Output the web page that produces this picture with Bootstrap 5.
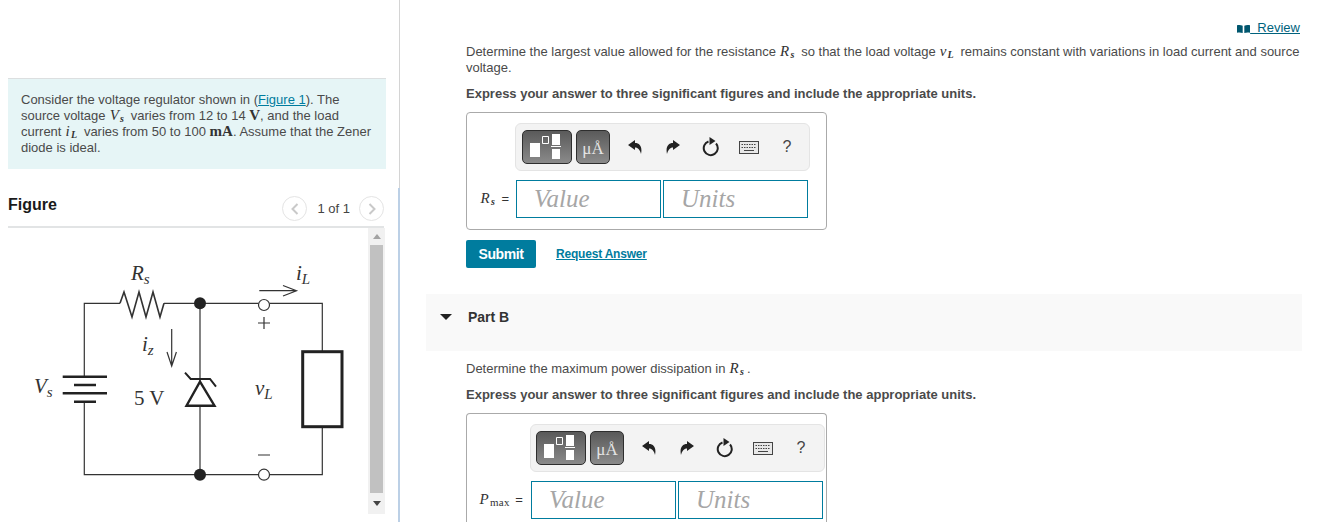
<!DOCTYPE html>
<html lang="en">
<head>
    <meta charset="UTF-8">
    <meta name="viewport" content="width=device-width, initial-scale=1.0">
    <title>Voltage regulator</title>
    <link href="https://cdn.jsdelivr.net/npm/bootstrap@5.3.0/dist/css/bootstrap.min.css" rel="stylesheet">
    <style>
        html, body {
            height: 522px;
            overflow: hidden;
        }
        body {
            font-family: "Liberation Sans", Arial, sans-serif;
            font-size: 13px;
            line-height: 16px;
            color: #4a4a4a;
            background: #fff;
        }
        a { color: #007c9e; }
        .shell { height: 522px; }
        .left-pane { width: 398px; flex: none; padding: 78px 12px 0 8px; }
        .prompt-box {
            width: 378px;
            height: 91px;
            padding: 13px 13px 0;
            background: #e6f5f6;
            border-top: 1px solid #dcdfe0;
        }
        .fig-head { height: 59px; width: 376px; border-bottom: 2px solid #e2e4e5; padding-top: 27px; }
        .fig-title { font-size: 16px; font-weight: 700; color: #1a1a1a; line-height: 16px; padding-top: 1px; }
        .pager-btn { width: 25px; height: 25px; border: 1px solid #e4e4e4; border-radius: 50%; }
        .pager-count { margin: 0 9px 0 10px; padding-top: 5px; color: #444; }
        .fig-body { width: 377px; height: 286px; }
        .fig-draw { width: 360px; height: 286px; flex: none; }
        .fig-scroll { width: 17px; background: #f1f1f1; padding: 0 2px; }
        .fig-thumb { height: 248px; background: #c1c1c1; flex: none; }
        .fig-arrow { height: 17px; flex: none; }
        .split { width: 2px; flex: none; }
        .split-top { height: 188px; width: 1px; margin-left: 1px; background: #d4d4d4; }
        .split-low { flex: 1; background: #bcd0e6; }
        .right-pane { flex: 1; padding: 20px 24px 0 66px; min-width: 0; }
        .review-link { text-align: right; height: 15px; line-height: 15px; }
        .review-link a { color: #00627d; }
        .q-text { margin: 0; }
        .q-first { margin-top: 9px; }
        .q-note { margin: 10px 0 0; font-weight: 700; font-size: 13px; color: #4a4a4a; }
        .answer-box {
            width: 361px;
            height: 118px;
            margin-top: 10px;
            border: 1px solid #aaa;
            border-radius: 4px;
            padding: 10px 0 0 13px;
        }
        .answer-low { height: 140px; margin-top: 10px; border-bottom: 0; padding-left: 12px; }
        .answer-low .toolbar { padding-left: 5px; }
        .label-col { width: 36px; flex: none; color: #333; }
        .label-col-wide { width: 52px; }
        .tools-slot { padding-left: 35px; }
        .tools-slot-wide { padding-left: 51px; }
        .toolbar {
            width: 295px;
            height: 48px;
            padding: 6px 0 6px 6px;
            background: #f3f3f3;
            border: 1px solid #e4e4e4;
            border-radius: 6px;
        }
        .tpl-btn {
            height: 34px;
            border: 1px solid #2e2e2e;
            border-radius: 5px;
            background: linear-gradient(#5a5a5a, #8a8a8a);
        }
        .tpl-one { width: 50px; margin-right: 4px; padding-right: 2px; }
        .tpl-two { width: 34px; padding-top: 3px; color: #e4e4e4; font-family: "Liberation Serif", serif; font-size: 17px; }
        .tool-icons { flex: 1; padding-left: 6px; }
        .tool-icon { width: 38px; }
        .tool-help { font-size: 16px; color: #444; }
        .answer-row { margin-top: 9px; }
        .answer-field {
            width: 145px;
            height: 38px;
            margin-right: 2px;
            padding-left: 17px;
            border: 1px solid #007c9e;
            font-family: "Liberation Serif", serif;
            font-style: italic;
            font-size: 25px;
            color: #a6a6a6;
            line-height: 36px;
        }
        .actions { margin-top: 10px; }
        .submit-btn {
            width: 70px;
            height: 28px;
            padding: 0;
            background: #007c9e;
            border: 0;
            border-radius: 2px;
            color: #fff;
            font-size: 14px;
            font-weight: 700;
            letter-spacing: -0.4px;
        }
        .answer-link { margin-left: 20px; font-size: 12px; font-weight: 700; letter-spacing: -0.2px; }
        .part-band {
            height: 57px;
            margin: 26px -2px 0 -40px;
            padding: 14px 0 0 14px;
            background: #f9f9f9;
            color: #333;
            font-size: 14px;
            font-weight: 700;
        }
        .part-caret {
            width: 0;
            height: 0;
            margin: 0 16px 0 0;
            border-left: 6px solid transparent;
            border-right: 6px solid transparent;
            border-top: 6px solid #222;
        }
        .part-row { height: 18px; }
        .after-band { margin-top: 10px; }
        .mth { font-family: "Liberation Serif", serif; font-style: italic; font-size: 15px; line-height: 0; letter-spacing: 1.2px; margin: 0 2px 0 .5px; color: #333; }
        .mth-up { font-family: "Liberation Serif", serif; font-weight: 700; font-size: 15px; line-height: 0; color: #333; }
        .mth sub { font-size: 10px; font-weight: 700; bottom: -2px; line-height: 0; position: relative; vertical-align: baseline; }
        .mth sub.up { font-size: 11px; font-style: normal; font-weight: 400; letter-spacing: .3px; }
        .fig-text { font-family: "Liberation Serif", serif; font-size: 21px; fill: #333; }
    </style>
</head>
<body>
    <div class="shell d-flex">
        <div class="left-pane">
            <div class="prompt-box">
                Consider the voltage regulator shown in (<a href="#">Figure 1</a>). The source voltage
                <span class="mth">V<sub>s</sub></span> varies from 12 to 14 <span class="mth-up">V</span>, and the load
                current <span class="mth">i<sub>L</sub></span> varies from 50 to 100 <span class="mth-up">mA</span>. Assume that the Zener
                diode is ideal.
            </div>
            <div class="fig-head d-flex justify-content-between">
                <div class="fig-title">Figure</div>
                <div class="d-flex align-items-start">
                    <div class="pager-btn d-flex align-items-center justify-content-center">
                        <svg width="8" height="12" viewBox="0 0 8 12"><path d="M6.500 1 1.500 6l5 5" fill="none" stroke="#c9c9c9" stroke-width="2"/></svg>
                    </div>
                    <div class="pager-count">1 of 1</div>
                    <div class="pager-btn d-flex align-items-center justify-content-center">
                        <svg width="8" height="12" viewBox="0 0 8 12"><path d="M1.500 1 6.500 6l-5 5" fill="none" stroke="#c9c9c9" stroke-width="2"/></svg>
                    </div>
                </div>
            </div>
            <div class="fig-body d-flex">
                <svg class="fig-draw" viewBox="8 -2 360 286">
                    <g fill="none" stroke="#333" stroke-width="1.2">
                        <path d="M120 73.3H84.3V146.7M84.3 171.7V244.7H258.5M269.500 244.7H322.3V196.7M322.3 121.7V73.3H269.500M258.500 73.3H164"/>
                        <path d="M200 73.3V151.7M200 175.7V244.7"/>
                        <path d="M120 73.3 124 62 132 87 139 62 146 87 153 62 160 87 164 73.3" stroke-width="1.6"/>
                        <path d="M171.7 99V136M167 122 171.7 136 176.4 122"/>
                        <path d="M259.3 60.7H296.5M283 55.5 296.5 60.7 283 66"/>
                        <path d="M258 93H270M264 87V99M258 225H270"/>
                    </g>
                    <g fill="none" stroke="#222" stroke-width="2.4">
                        <path d="M62.7 146.7H107M62.7 163.3H107M74 155H96M74 171.7H96"/>
                        <path d="M200 151.7 214.5 175.7H186.5Z"/>
                        <path d="M185 142.7 190.7 149H210L216 156.7" stroke-width="2"/>
                    </g>
                    <rect x="302.7" y="121.7" width="39.3" height="75" fill="#fff" stroke="#222" stroke-width="3"/>
                    <circle cx="200" cy="73.3" r="6" fill="#222"/>
                    <circle cx="200" cy="244.7" r="6" fill="#222"/>
                    <circle cx="264" cy="75" r="5.5" fill="#fff" stroke="#333" stroke-width="1.2"/>
                    <circle cx="264" cy="244.7" r="5.5" fill="#fff" stroke="#333" stroke-width="1.2"/>
                    <text class="fig-text" x="131" y="50" font-style="italic">R<tspan font-size="15" dy="4">s</tspan></text>
                    <text class="fig-text" x="296" y="50" font-style="italic">i<tspan font-size="15" dy="4">L</tspan></text>
                    <text class="fig-text" x="142" y="121" font-style="italic">i<tspan font-size="15" dy="4">z</tspan></text>
                    <text class="fig-text" x="34" y="163" font-style="italic">V<tspan font-size="15" dy="4">s</tspan></text>
                    <text class="fig-text" x="134" y="175">5 V</text>
                    <text class="fig-text" x="255" y="165" font-style="italic">v<tspan font-size="15" dy="4">L</tspan></text>
                </svg>
                <div class="fig-scroll d-flex flex-column">
                    <div class="fig-arrow d-flex align-items-center justify-content-center">
                        <svg width="8" height="5" viewBox="0 0 8 5"><path d="M4 0 8 5H0Z" fill="#a3a3a3"/></svg>
                    </div>
                    <div class="fig-thumb"></div>
                    <div class="fig-arrow flex-fill d-flex align-items-center justify-content-center">
                        <svg width="8" height="5" viewBox="0 0 8 5"><path d="M0 0H8L4 5Z" fill="#444"/></svg>
                    </div>
                </div>
            </div>
        </div>
        <div class="split d-flex flex-column">
            <div class="split-top"></div>
            <div class="split-low"></div>
        </div>
        <div class="right-pane">
            <div class="review-link">
                <a href="#"><svg width="13" height="10" viewBox="0 0 16 10"><path d="M0 0.5C2 0 5 0 7 1V10C5 9 2 9 0 9.5ZM16 0.5C14 0 11 0 9 1V10C11 9 14 9 16 9.5Z" fill="#00566e"/></svg>&nbsp; Review</a>
            </div>
            <p class="q-text q-first">Determine the largest value allowed for the resistance <span class="mth">R<sub>s</sub></span> so that the load voltage <span class="mth">v<sub>L</sub></span> remains constant with variations in load current and source voltage.</p>
            <p class="q-note">Express your answer to three significant figures and include the appropriate units.</p>
            <div class="answer-box">
                <div class="tools-slot">
                    <div class="toolbar d-flex align-items-center">
                        <div class="tpl-btn tpl-one d-flex align-items-center justify-content-center">
                            <svg width="32" height="26" viewBox="0 0 32 26"><path d="M0 9H10V23H0ZM22 0H30V11H22ZM22 15H30V25H22Z" fill="#fff"/><path d="M21 12.500H31" stroke="#fff" stroke-width="1"/><path d="M12.500 2.500H18.500V9.500H12.500Z" fill="none" stroke="#fff"/></svg>
                        </div>
                        <div class="tpl-btn tpl-two d-flex align-items-center justify-content-center">μÅ</div>
                        <div class="tool-icons d-flex align-items-center">
                            <div class="tool-icon text-center"><svg width="14" height="15" viewBox="0 0 14 15"><path d="M0 5 7 0V3C12 3 14.500 7 13 14 12 10 10 7.500 7 7.500V10Z" fill="#222"/></svg></div>
                            <div class="tool-icon text-center"><svg width="14" height="15" viewBox="0 0 14 15"><path d="M14 5 7 0V3C2 3-.5 7 1 14 2 10 4 7.500 7 7.500V10Z" fill="#222"/></svg></div>
                            <div class="tool-icon text-center"><svg width="18" height="20" viewBox="0 0 18 20"><path d="M6.500 4.500A7 7 0 1 0 14 6.500" fill="none" stroke="#222" stroke-width="2"/><path d="M7.500 0 13.500 4 7.500 8Z" fill="#222"/></svg></div>
                            <div class="tool-icon text-center"><svg width="20" height="13" viewBox="0 0 20 13"><rect x=".5" y=".5" width="19" height="12" fill="#e8e8e8" stroke="#444"/><path d="M2.500 3.500H17.500M2.500 6.500H17.500" stroke="#444" stroke-dasharray="1.500 1"/><path d="M5 9.500H15" stroke="#444"/></svg></div>
                            <div class="tool-icon tool-help text-center">?</div>
                        </div>
                    </div>
                </div>
                <div class="answer-row d-flex">
                    <div class="label-col align-self-center"><span class="mth">R<sub>s</sub></span> =</div>
                    <div class="answer-field">Value</div>
                    <div class="answer-field">Units</div>
                </div>
            </div>
            <div class="actions d-flex align-items-center">
                <button type="button" class="submit-btn">Submit</button>
                <a href="#" class="answer-link">Request Answer</a>
            </div>
            <div class="part-band">
                <div class="part-row d-flex align-items-center">
                    <div class="part-caret"></div>
                    <div>Part B</div>
                </div>
            </div>
            <p class="q-text after-band">Determine the maximum power dissipation in <span class="mth">R<sub>s</sub></span>.</p>
            <p class="q-note">Express your answer to three significant figures and include the appropriate units.</p>
            <div class="answer-box answer-low">
                <div class="tools-slot-wide">
                    <div class="toolbar d-flex align-items-center">
                        <div class="tpl-btn tpl-one d-flex align-items-center justify-content-center">
                            <svg width="32" height="26" viewBox="0 0 32 26"><path d="M0 9H10V23H0ZM22 0H30V11H22ZM22 15H30V25H22Z" fill="#fff"/><path d="M21 12.500H31" stroke="#fff" stroke-width="1"/><path d="M12.500 2.500H18.500V9.500H12.500Z" fill="none" stroke="#fff"/></svg>
                        </div>
                        <div class="tpl-btn tpl-two d-flex align-items-center justify-content-center">μÅ</div>
                        <div class="tool-icons d-flex align-items-center">
                            <div class="tool-icon text-center"><svg width="14" height="15" viewBox="0 0 14 15"><path d="M0 5 7 0V3C12 3 14.500 7 13 14 12 10 10 7.500 7 7.500V10Z" fill="#222"/></svg></div>
                            <div class="tool-icon text-center"><svg width="14" height="15" viewBox="0 0 14 15"><path d="M14 5 7 0V3C2 3-.5 7 1 14 2 10 4 7.500 7 7.500V10Z" fill="#222"/></svg></div>
                            <div class="tool-icon text-center"><svg width="18" height="20" viewBox="0 0 18 20"><path d="M6.500 4.500A7 7 0 1 0 14 6.500" fill="none" stroke="#222" stroke-width="2"/><path d="M7.500 0 13.500 4 7.500 8Z" fill="#222"/></svg></div>
                            <div class="tool-icon text-center"><svg width="20" height="13" viewBox="0 0 20 13"><rect x=".5" y=".5" width="19" height="12" fill="#e8e8e8" stroke="#444"/><path d="M2.500 3.500H17.500M2.500 6.500H17.500" stroke="#444" stroke-dasharray="1.500 1"/><path d="M5 9.500H15" stroke="#444"/></svg></div>
                            <div class="tool-icon tool-help text-center">?</div>
                        </div>
                    </div>
                </div>
                <div class="answer-row d-flex">
                    <div class="label-col label-col-wide align-self-center"><span class="mth">P<sub class="up">max</sub></span> =</div>
                    <div class="answer-field">Value</div>
                    <div class="answer-field">Units</div>
                </div>
            </div>
        </div>
    </div>
    <script src="https://cdn.jsdelivr.net/npm/bootstrap@5.3.0/dist/js/bootstrap.bundle.min.js"></script>
</body>
</html>
